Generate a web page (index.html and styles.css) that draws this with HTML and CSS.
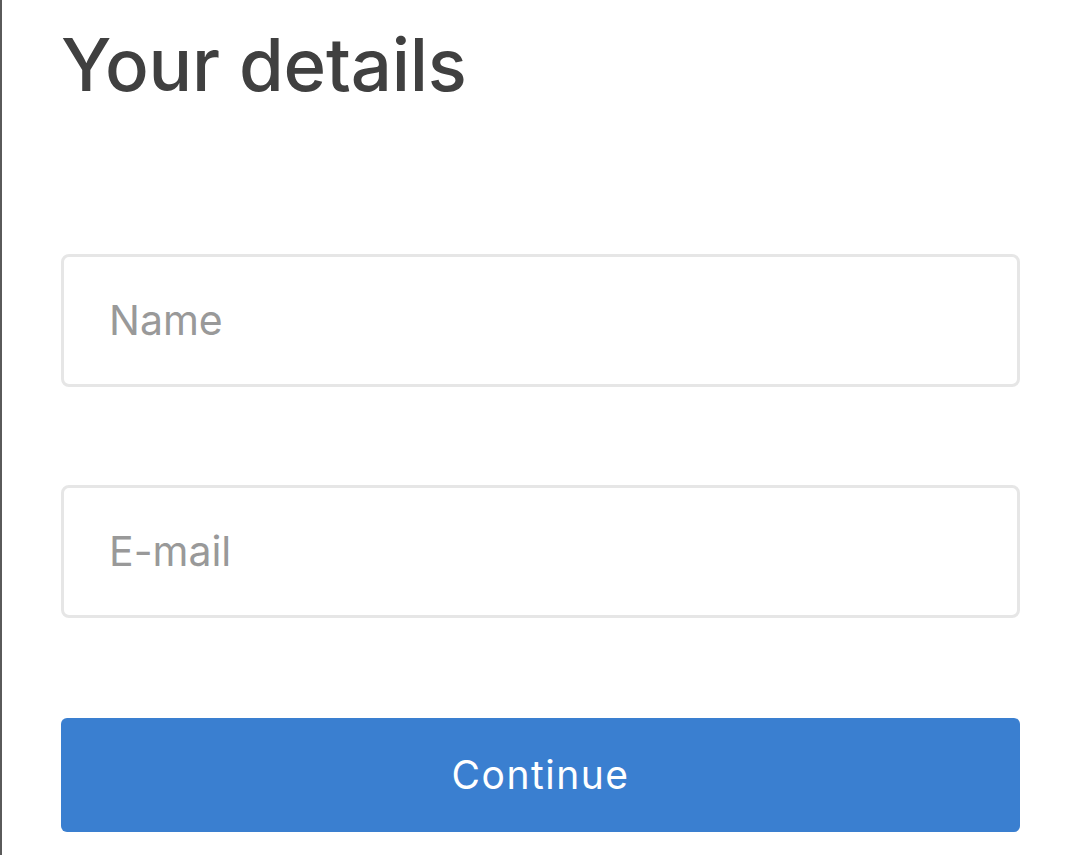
FILE: index.html
```html
<!DOCTYPE html>
<html lang="en">
<head>
<meta charset="utf-8">
<title>Your details</title>
<link rel="stylesheet" href="styles.css">
</head>
<body>
<main class="page">
  <h1 class="title">Your details</h1>
  <form class="form">
    <label class="field"><input class="input" type="text" placeholder="Name"></label>
    <label class="field"><input class="input" type="email" placeholder="E-mail"></label>
    <button class="button" type="button">Continue</button>
  </form>
</main>
</body>
</html>
```
FILE: styles.css
```css
html, body {
  margin: 0;
  padding: 0;
  background: #ffffff;
}
body {
  font-family: Inter, "Noto Sans", sans-serif;
  border-left: 2px solid #5a5a5a;
  min-height: 855px;
  box-sizing: border-box;
}
.page {
  padding: 29px 60px 0 59px;
}
.title {
  margin: 0;
  font-size: 72.5px;
  line-height: 1;
  font-weight: 500;
  color: #404040;
  letter-spacing: -0.2px;
}
.form {
  display: flex;
  flex-direction: column;
  margin-top: 152px;
}
.field {
  display: block;
  margin-bottom: 98px;
}
.input {
  display: block;
  width: 100%;
  box-sizing: border-box;
  height: 133px;
  border: 3px solid #e6e6e6;
  border-radius: 8px;
  padding: 0 0 0 45px;
  font-family: inherit;
  font-size: 41px;
  color: #333;
  outline: none;
  background: #fff;
}
.input::placeholder {
  color: #999999;
}
.field:nth-child(2) {
  margin-bottom: 100px;
}
.button {
  display: block;
  width: 100%;
  height: 114px;
  border: none;
  border-radius: 6px;
  background: #3a7fd0;
  color: #ffffff;
  font-family: inherit;
  font-size: 39px;
  letter-spacing: 1.5px;
  font-weight: 400;
}
```
